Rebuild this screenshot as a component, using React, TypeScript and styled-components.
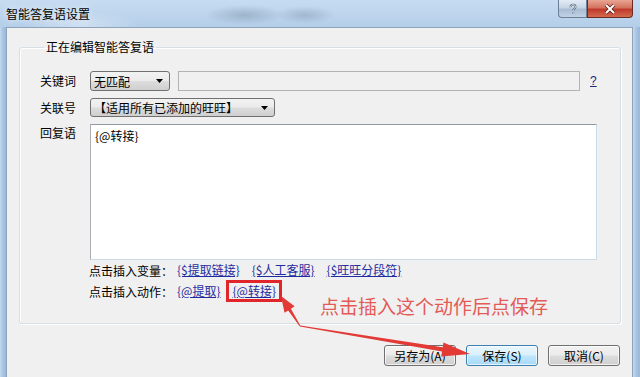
import React from 'react'
import styled, { createGlobalStyle } from 'styled-components'

const GlobalStyle = createGlobalStyle`
  html, body {
    margin: 0;
    padding: 0;
    background: #f0f0f0;
  }
  * {
    box-sizing: border-box;
  }
`

const FONT = `"Noto Sans CJK SC", "Liberation Sans", sans-serif`

const Window = styled.div`
  position: relative;
  width: 640px;
  height: 377px;
  overflow: hidden;
  display: flex;
  flex-direction: column;
  font-family: ${FONT};
  font-size: 12px;
  color: #000;
  background: #a9c6e6;
`

const TitleBar = styled.div`
  height: 27px;
  display: flex;
  align-items: flex-start;
  padding-right: 7px;
  background:
    radial-gradient(ellipse 40px 10px at 245px 15px, rgba(120, 140, 165, 0.45), transparent),
    radial-gradient(ellipse 30px 9px at 305px 15px, rgba(120, 140, 165, 0.4), transparent),
    radial-gradient(ellipse 60px 14px at 80px 25px, rgba(255, 255, 255, 0.35), transparent),
    linear-gradient(180deg, #c7dcf1 0%, #bcd4ec 60%, #b4cee9 100%);
`

const Title = styled.div`
  flex: 1;
  padding: 6px 0 0 6px;
  line-height: 16px;
  color: #000;
  text-shadow: 0 0 6px rgba(255, 255, 255, 0.9);
`

const CaptionButton = styled.div<{ $close?: boolean }>`
  height: 18px;
  width: ${p => (p.$close ? '46px' : '29px')};
  display: flex;
  align-items: center;
  justify-content: center;
  border: 1px solid ${p => (p.$close ? '#6b2a22' : '#6d7f95')};
  border-top: none;
  border-radius: ${p => (p.$close ? '0 0 4px 0' : '0 0 0 4px')};
  background: ${p =>
    p.$close
      ? 'linear-gradient(180deg, #e8a593 0%, #d4735f 45%, #c0392b 55%, #d26a4e 100%)'
      : 'linear-gradient(180deg, #e3ecf5 0%, #c6d5e5 45%, #a9bdd3 55%, #c0d2e4 100%)'};
`

const Body = styled.div`
  flex: 1;
  display: flex;
`

const SideFrame = styled.div<{ $w: number }>`
  width: ${p => p.$w}px;
  background: linear-gradient(90deg, #c3d8ee 0%, #a7c3e2 50%, #98b7da 100%);
`

const Content = styled.div`
  flex: 1;
  display: flex;
  flex-direction: column;
  background: #f0f0f0;
  border: 1px solid #8fa3b9;
  border-bottom: none;
  padding: 11px 11px 0 12px;
`

const Group = styled.fieldset`
  margin: 0;
  padding: 0 23px 21px 20px;
  border: 1px solid #d5dfe5;
  border-radius: 3px;
  box-shadow: inset 1px 1px 0 #fff, 1px 1px 0 #fff;
`

const Legend = styled.legend`
  margin-left: 4px;
  padding: 0 2px;
  line-height: 16px;
`

const Row = styled.div<{ $top: number; $h: number; $align?: string }>`
  display: flex;
  align-items: ${p => p.$align || 'center'};
  height: ${p => p.$h}px;
  margin-top: ${p => p.$top}px;
`

const Label = styled.div<{ $pad?: number }>`
  width: 50px;
  flex: none;
  padding-top: ${p => p.$pad || 0}px;
  line-height: 16px;
`

const Combo = styled.div<{ $w: number }>`
  width: ${p => p.$w}px;
  height: 100%;
  display: flex;
  align-items: center;
  justify-content: space-between;
  padding: 0 6px 0 3px;
  border: 1px solid #707070;
  border-radius: 3px;
  background: linear-gradient(180deg, #f2f2f2 0%, #ebebeb 48%, #dddddd 52%, #cfcfcf 100%);
  white-space: nowrap;
`

const TextInput = styled.div`
  margin-left: 8px;
  width: 402px;
  height: 100%;
  border: 1px solid #b3b3b3;
  background: #f0f0f0;
`

const Help = styled.a`
  margin-left: 10px;
  color: #1a2a7a;
  text-decoration: underline;
  font-family: "Liberation Sans", sans-serif;
  font-size: 12px;
`

const TextArea = styled.div`
  flex: 1;
  height: 100%;
  padding: 3px 4px;
  background: #fff;
  border: 1px solid #abadb3;
  border-top-color: #8e9aa6;
  border-right-color: #c9dbe8;
  border-bottom-color: #c9dbe8;
  line-height: 16px;
`

const InsertRow = styled.div<{ $top: number; $h: number }>`
  display: flex;
  align-items: center;
  gap: 12px;
  padding-left: 49px;
  height: ${p => p.$h}px;
  margin-top: ${p => p.$top}px;
  white-space: nowrap;
`

const InsertLabel = styled.span`
  margin-right: -8px;
`

const Token = styled.a<{ $boxed?: boolean }>`
  color: #1e2ca0;
  text-decoration: underline;
  padding: ${p => (p.$boxed ? '0 3px' : '0')};
  margin-left: ${p => (p.$boxed ? '-6px' : '0')};
  border: ${p => (p.$boxed ? '3px solid #e0262a' : 'none')};
  line-height: 16px;
`

const ButtonBar = styled.div`
  display: flex;
  justify-content: flex-end;
  gap: 10px;
  margin-top: 21px;
  padding-right: 1px;
`

const Button = styled.div<{ $active?: boolean }>`
  width: 72px;
  height: 21px;
  display: flex;
  align-items: center;
  justify-content: center;
  border: 1px solid ${p => (p.$active ? '#3c7fb1' : '#707070')};
  border-radius: 3px;
  background: ${p =>
    p.$active
      ? 'linear-gradient(180deg, #eaf6fd 0%, #d9f0fc 48%, #bee6fd 52%, #a7d9f5 100%)'
      : 'linear-gradient(180deg, #f2f2f2 0%, #ebebeb 48%, #dddddd 52%, #cfcfcf 100%)'};
  box-shadow: inset 0 0 0 1px rgba(255, 255, 255, 0.7);
`

const Overlay = styled.svg`
  position: absolute;
  left: 0;
  top: 0;
  pointer-events: none;
`

const Note = styled.div`
  position: absolute;
  left: 320px;
  top: 295px;
  font-size: 19px;
  line-height: 22px;
  color: #e45a55;
  white-space: nowrap;
`

const DownArrow = () => (
  <svg width="7" height="4" viewBox="0 0 7 4">
    <path d="M0 0h7L3.5 4z" fill="#000" />
  </svg>
)

const HelpGlyph = () => (
  <svg width="12" height="12" viewBox="0 0 12 12">
    <path
      d="M3.5 4.2C3.5 2.6 4.6 1.6 6 1.6s2.5 1 2.5 2.3c0 1.6-2.2 1.9-2.2 3.6M6.3 9.3v1.3"
      stroke="#4a5870"
      strokeWidth="1.8"
      fill="none"
    />
    <path
      d="M3.5 4.2C3.5 2.6 4.6 1.6 6 1.6s2.5 1 2.5 2.3c0 1.6-2.2 1.9-2.2 3.6M6.3 9.3v1.3"
      stroke="#fff"
      strokeWidth="0.8"
      fill="none"
    />
  </svg>
)

const CloseGlyph = () => (
  <svg width="14" height="12" viewBox="0 0 14 12">
    <path d="M3 2l8 8M11 2l-8 8" stroke="#5a1a12" strokeWidth="3.6" />
    <path d="M3 2l8 8M11 2l-8 8" stroke="#fff" strokeWidth="2" />
  </svg>
)

// tapered arrow polygon from tail to tip
function arrow(x1: number, y1: number, x2: number, y2: number, head: number, hw: number, sw: number) {
  const dx = x2 - x1
  const dy = y2 - y1
  const len = Math.hypot(dx, dy)
  const ux = dx / len
  const uy = dy / len
  const nx = -uy
  const ny = ux
  const bx = x2 - ux * head
  const by = y2 - uy * head
  const pts = [
    [x1 + nx * 0.5, y1 + ny * 0.5],
    [bx + nx * sw, by + ny * sw],
    [bx + nx * hw, by + ny * hw],
    [x2, y2],
    [bx - nx * hw, by - ny * hw],
    [bx - nx * sw, by - ny * sw],
    [x1 - nx * 0.5, y1 - ny * 0.5],
  ]
  return pts.map(p => p.map(v => v.toFixed(1)).join(',')).join(' ')
}

const variables = ['{$提取链接}', '{$人工客服}', '{$旺旺分段符}']

export default function App() {
  return (
    <Window>
      <GlobalStyle />
      <TitleBar>
        <Title>智能答复语设置</Title>
        <CaptionButton>
          <HelpGlyph />
        </CaptionButton>
        <CaptionButton $close>
          <CloseGlyph />
        </CaptionButton>
      </TitleBar>
      <Body>
        <SideFrame $w={6} />
        <Content>
          <Group>
            <Legend>正在编辑智能答复语</Legend>
            <Row $top={16} $h={20}>
              <Label>关键词</Label>
              <Combo $w={80}>
                无匹配
                <DownArrow />
              </Combo>
              <TextInput />
              <Help>?</Help>
            </Row>
            <Row $top={7} $h={19}>
              <Label>关联号</Label>
              <Combo $w={185}>
                【适用所有已添加的旺旺】
                <DownArrow />
              </Combo>
            </Row>
            <Row $top={7} $h={136} $align="flex-start">
              <Label $pad={1}>回复语</Label>
              <TextArea>{'{@转接}'}</TextArea>
            </Row>
            <InsertRow $top={2} $h={16}>
              <InsertLabel>点击插入变量：</InsertLabel>
              {variables.map(v => (
                <Token key={v}>{v}</Token>
              ))}
            </InsertRow>
            <InsertRow $top={2} $h={22}>
              <InsertLabel>点击插入动作：</InsertLabel>
              <Token>{'{@提取}'}</Token>
              <Token $boxed>{'{@转接}'}</Token>
            </InsertRow>
          </Group>
          <ButtonBar>
            <Button>另存为(A)</Button>
            <Button $active>保存(S)</Button>
            <Button>取消(C)</Button>
          </ButtonBar>
        </Content>
        <SideFrame $w={7} />
      </Body>
      <Overlay width="640" height="377" viewBox="0 0 640 377">
        <polygon points={arrow(300, 326, 281, 296, 16, 6, 1.6)} fill="#e23a35" />
        <polygon points={arrow(300, 326, 470, 354, 28, 7, 2.2)} fill="#e23a35" />
      </Overlay>
      <Note>点击插入这个动作后点保存</Note>
    </Window>
  )
}
